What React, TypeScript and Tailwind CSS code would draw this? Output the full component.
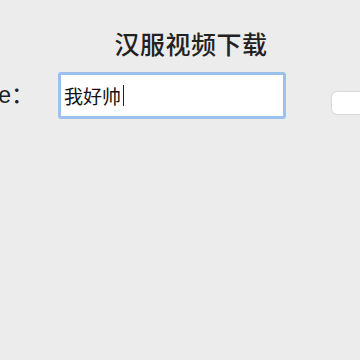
const App = () => {
    return (
        <div className="w-[360px] h-[360px] overflow-hidden bg-[#ececec] font-['Noto_Sans_CJK_SC',sans-serif] text-[#1e1e1e]">
            {/* Title */}
            <div className="flex justify-center pl-[22px] pt-[31px]">
                <h1 className="text-[25px] leading-none font-medium tracking-[0.5px] text-[#222]">汉服视频下载</h1>
            </div>

            {/* Form row */}
            <div className="flex items-center mt-[16px] -ml-[66px] w-[520px]">
                <label className="w-[100px] text-right text-[23px] leading-none whitespace-nowrap font-['Liberation_Sans','Noto_Sans_CJK_SC',sans-serif]">
                    Name：
                </label>
                <div className="ml-[24px] w-[228px] h-[47px] rounded-[3px] border-[3px] border-[#9ec0ef] bg-white flex items-center px-[3px]">
                    <span className="text-[19px] leading-none text-[#111]">我好帅</span>
                    <span className="ml-[2px] w-[1px] h-[21px] bg-[#222]" />
                </div>
                <button className="ml-[46px] w-[90px] h-[22px] rounded-[5px] bg-white shadow-[0_0_2px_rgba(0,0,0,0.25)] mt-[14px]" />
            </div>
        </div>
    );
};

export default App;
